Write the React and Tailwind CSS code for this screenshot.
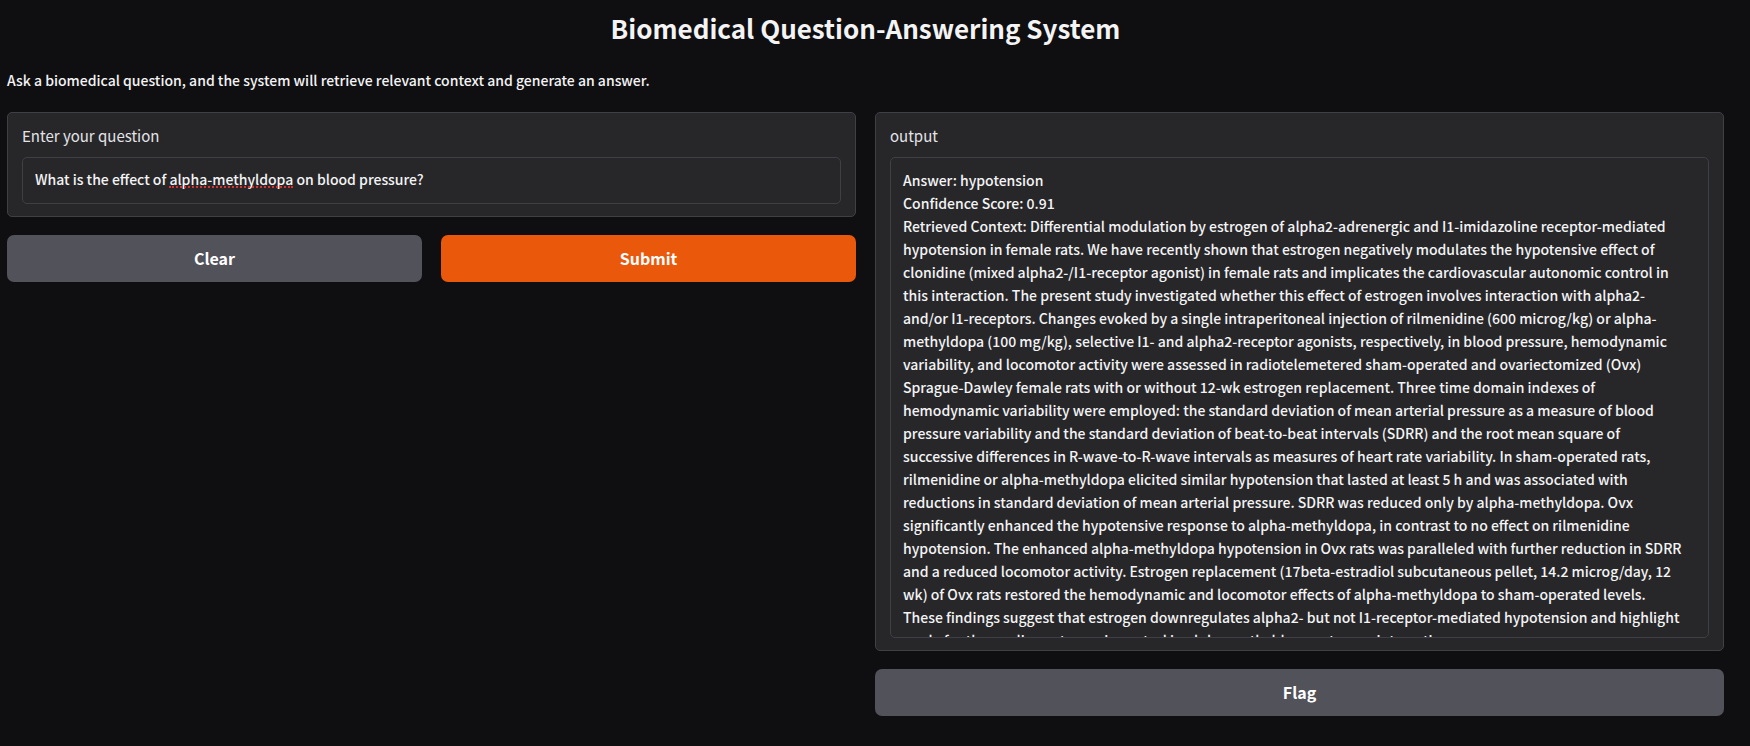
const ANSWER = `Answer: hypotension
Confidence Score: 0.91
Retrieved Context: Differential modulation by estrogen of alpha2-adrenergic and I1-imidazoline receptor-mediated hypotension in female rats. We have recently shown that estrogen negatively modulates the hypotensive effect of clonidine (mixed alpha2-/I1-receptor agonist) in female rats and implicates the cardiovascular autonomic control in this interaction. The present study investigated whether this effect of estrogen involves interaction with alpha2- and/or I1-receptors. Changes evoked by a single intraperitoneal injection of rilmenidine (600 microg/kg) or alpha-methyldopa (100 mg/kg), selective I1- and alpha2-receptor agonists, respectively, in blood pressure, hemodynamic variability, and locomotor activity were assessed in radiotelemetered sham-operated and ovariectomized (Ovx) Sprague-Dawley female rats with or without 12-wk estrogen replacement. Three time domain indexes of hemodynamic variability were employed: the standard deviation of mean arterial pressure as a measure of blood pressure variability and the standard deviation of beat-to-beat intervals (SDRR) and the root mean square of successive differences in R-wave-to-R-wave intervals as measures of heart rate variability. In sham-operated rats, rilmenidine or alpha-methyldopa elicited similar hypotension that lasted at least 5 h and was associated with reductions in standard deviation of mean arterial pressure. SDRR was reduced only by alpha-methyldopa. Ovx significantly enhanced the hypotensive response to alpha-methyldopa, in contrast to no effect on rilmenidine hypotension. The enhanced alpha-methyldopa hypotension in Ovx rats was paralleled with further reduction in SDRR and a reduced locomotor activity. Estrogen replacement (17beta-estradiol subcutaneous pellet, 14.2 microg/day, 12 wk) of Ovx rats restored the hemodynamic and locomotor effects of alpha-methyldopa to sham-operated levels. These findings suggest that estrogen downregulates alpha2- but not I1-receptor-mediated hypotension and highlight a role for the cardiac autonomic control in alpha-methyldopa-estrogen interaction.`;

function Panel({ id, label, children }) {
  return (
    <div className="rounded-[5px] border border-[#3f3f46] bg-[#27272a] px-[14px] pt-[11px] pb-[12px]">
      <label htmlFor={id} className="mb-[10px] block text-[15px] font-normal text-[#e4e4e7]">
        {label}
      </label>
      {children}
    </div>
  );
}

function Button({ primary, children }) {
  return (
    <button
      type="button"
      className={`h-[47px] flex-1 rounded-[7px] pb-[2px] text-[16px] leading-[24px] font-bold text-white ${
        primary ? "bg-[#ea580c]" : "bg-[#52525b]"
      }`}
    >
      {children}
    </button>
  );
}

export default function App() {
  return (
    <div className="min-h-screen bg-[#0f0f11] pr-[26px] pl-[7px] font-['Noto_Sans_CJK_SC','Noto_Sans',sans-serif] text-[14px] leading-[23px] font-medium text-[#f4f4f5]">
      <h1 className="pt-[8px] text-center text-[26px] leading-[40px] font-bold">
        Biomedical Question-Answering System
      </h1>
      <p className="pt-[21px] pb-[20px]">
        Ask a biomedical question, and the system will retrieve relevant context and generate an answer.
      </p>
      <main className="grid grid-cols-2 items-start gap-[19px]">
        <section className="flex flex-col gap-[18px]">
          <Panel id="question" label="Enter your question">
            <div className="relative">
              <input
                id="question"
                type="text"
                spellCheck={false}
                defaultValue="What is the effect of alpha-methyldopa on blood pressure?"
                className="block h-[47px] w-full rounded-[5px] border border-[#3f3f46] bg-transparent px-[12px] pb-[3px] outline-none"
              />
              <span
                aria-hidden="true"
                className="pointer-events-none absolute top-[29px] left-[147px] w-[124px] border-b-2 border-dotted border-[#d8342f]"
              />
            </div>
          </Panel>
          <div className="flex gap-[19px]">
            <Button>Clear</Button>
            <Button primary>Submit</Button>
          </div>
        </section>
        <section className="flex flex-col gap-[18px]">
          <Panel id="output" label="output">
            <textarea
              id="output"
              readOnly
              spellCheck={false}
              defaultValue={ANSWER}
              className="block h-[481px] w-full resize-none overflow-hidden rounded-[5px] border border-[#3f3f46] bg-transparent py-[11px] pr-[24px] pl-[12px] outline-none"
            />
          </Panel>
          <div className="flex">
            <Button>Flag</Button>
          </div>
        </section>
      </main>
    </div>
  );
}
